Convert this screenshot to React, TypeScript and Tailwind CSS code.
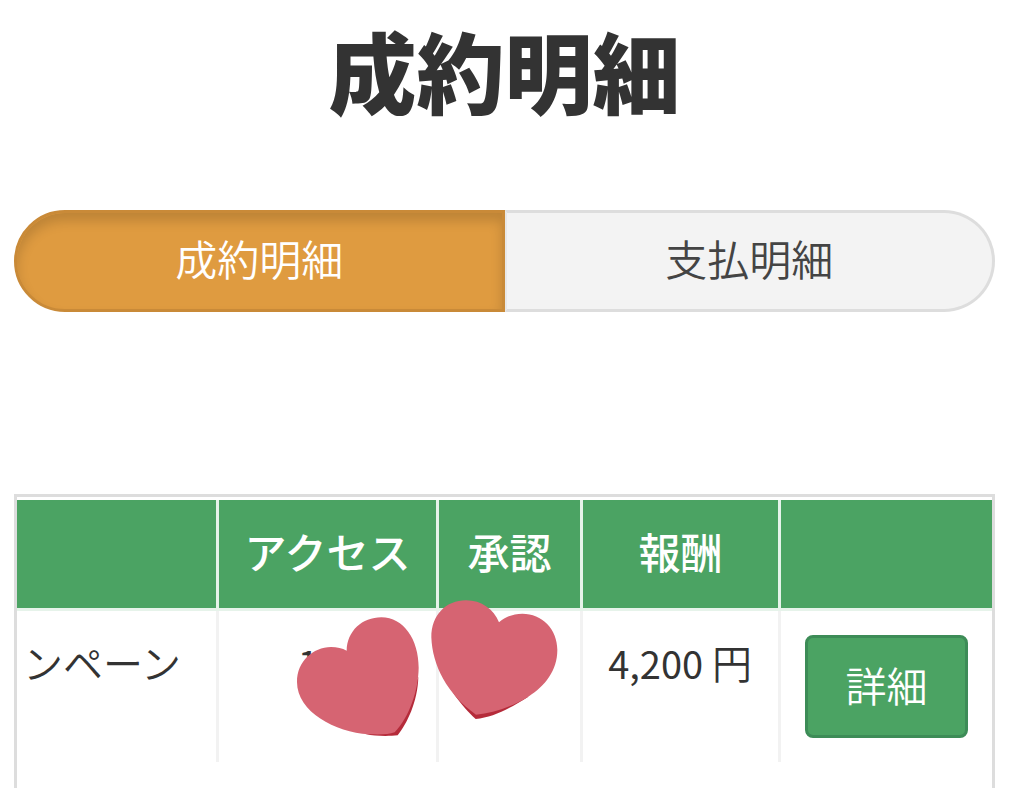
import React from "react";

function LeftHeart() {
  return (
    <svg
      aria-hidden="true"
      viewBox="50 110 366 360"
      className="absolute left-[78px] top-[6px] h-[120px] w-[122px]"
    >
      <path
        fill="#b52b3a"
        d="M414 290C412 365 380 430 352 465C325 468 285 468 255 461L343 440Z"
      />
      <path
        fill="#d66472"
        d="M199 211C200 152 246 111 303 111C370 111 415 178 415 262C414 330 388 408 343 456C325 463 300 463 265 462C165 455 50 395 50 305C50 243 98 201 152 200C170 200 186 204 199 211Z"
      />
    </svg>
  );
}

function RightHeart() {
  return (
    <svg
      aria-hidden="true"
      viewBox="453 60 381 360"
      className="absolute -left-2 -top-[11px] h-[120px] w-[127px]"
    >
      <path
        fill="#b52b3a"
        d="M520 340C545 375 565 397 587 417C640 412 690 385 745 350L640 350Z"
      />
      <path
        fill="#d66472"
        d="M657 127C641 88 605 61 558 61C498 61 454 105 454 172C457 255 500 342 588 404C640 399 695 381 745 350C795 318 832 272 832 210C832 147 786 101 727 101C701 101 676 110 657 127Z"
      />
    </svg>
  );
}

function Amount({ value, unit }: { value: string; unit: string }) {
  return (
    <>
      <span className="text-[38px] font-normal">{value}</span> {unit}
    </>
  );
}

const headCell =
  "h-[111px] border-b-[3px] border-[#e6f3ea] p-0 pb-[6px] text-center text-[42px] leading-[60px] font-medium text-white";
const bodyCell =
  "h-[151px] border-r-[3px] border-[#f2f2f2] p-0 pt-[22px] align-top text-[40px] leading-[58px] font-[350] whitespace-nowrap";

export default function App() {
  return (
    <main className="flex h-screen flex-col overflow-hidden bg-white pr-[29px] pl-[14px] font-['Noto_Sans_CJK_JP',sans-serif] text-[#333]">
      <h1 className="pt-[4px] text-center text-[88px] leading-[130px] font-black">
        成約明細
      </h1>

      <nav className="mt-[76px] flex h-[102px] shrink-0 text-[42px] leading-[60px] font-[350]">
        <button
          type="button"
          aria-pressed="true"
          className="w-1/2 rounded-l-full border-[3px] border-[#c98a38] border-r-[#c98a38] bg-[#df9b40] pb-[6px] text-white shadow-[inset_0_8px_12px_rgba(0,0,0,0.15)]"
        >
          成約明細
        </button>
        <button
          type="button"
          aria-pressed="false"
          className="w-1/2 rounded-r-full border-[3px] border-l-2 border-[#ddd] border-l-[#e8e8e8] bg-[#f3f3f3] pb-[6px] text-[#444]"
        >
          支払明細
        </button>
      </nav>

      <section className="mt-[182px] flex-1 border-x-[3px] border-t-[3px] border-[#ddd] pt-[3px]">
        <table className="w-full table-fixed border-separate border-spacing-0">
          <colgroup>
            <col className="w-[202px]" />
            <col className="w-[220px]" />
            <col className="w-[144px]" />
            <col className="w-[198px]" />
            <col />
          </colgroup>
          <thead className="bg-[#4ba363]">
            <tr>
              <th className={headCell + " border-r-[3px]"}></th>
              <th className={headCell + " border-r-[3px]"}>アクセス</th>
              <th className={headCell + " border-r-[3px]"}>承認</th>
              <th className={headCell + " border-r-[3px]"}>報酬</th>
              <th className={headCell}></th>
            </tr>
          </thead>
          <tbody>
            <tr>
              <td className={bodyCell + " pl-[6px]"}>ンペーン</td>
              <td className={bodyCell + " relative pr-[26px] text-right"}>
                <Amount value="100" unit="件" />
                <LeftHeart />
              </td>
              <td className={bodyCell + " relative pr-[26px] text-right"}>
                <Amount value="1" unit="件" />
                <RightHeart />
              </td>
              <td className={bodyCell + " pr-[26px] text-right"}>
                <Amount value="4,200" unit="円" />
              </td>
              <td className="p-0 pt-[24px] pr-[24px] pl-[24px] align-top">
                <button
                  type="button"
                  className="h-[103px] w-full rounded-[8px] border-[3px] border-[#3d8c57] bg-[#4ba363] pb-[6px] text-[41px] leading-[60px] font-[350] text-white"
                >
                  詳細
                </button>
              </td>
            </tr>
          </tbody>
        </table>
      </section>
    </main>
  );
}
